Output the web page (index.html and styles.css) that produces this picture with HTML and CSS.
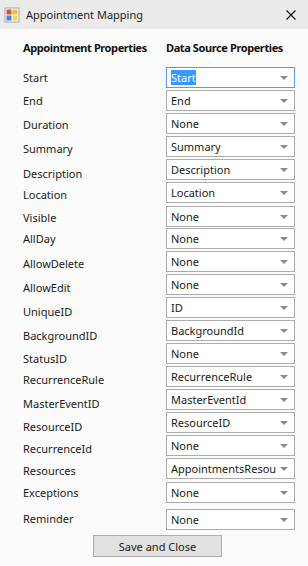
FILE: index.html
```html
<!DOCTYPE html>
<html lang="en">
<head>
    <meta charset="UTF-8">
    <meta name="viewport" content="width=device-width, initial-scale=1.0">
    <title>Appointment Mapping</title>
    <link rel="stylesheet" href="styles.css">
</head>
<body>

    <div class="titlebar">
        <svg class="app-icon" width="16" height="16" viewBox="0 0 16 16">
            <rect x="1" y="1" width="14" height="14" fill="#fff" stroke="#9aa7b8"/>
            <rect x="2.5" y="2.5" width="5" height="5" fill="#e0522b"/>
            <rect x="8.5" y="2.5" width="5" height="5" fill="#f5c02a"/>
            <rect x="2.5" y="8.5" width="5" height="5" fill="#4e7fd0"/>
            <rect x="8.5" y="8.5" width="5" height="5" fill="#f3d35a"/>
        </svg>
        <span class="title">Appointment Mapping</span>
        <svg class="close" width="10" height="10" viewBox="0 0 10 10">
            <path d="M0.5 0.5 L9.5 9.5 M9.5 0.5 L0.5 9.5" stroke="#111" stroke-width="1.1"/>
        </svg>
    </div>

    <div class="form">
        <div class="heads">
            <span class="head-left">Appointment Properties</span>
            <span class="head-right">Data Source Properties</span>
        </div>

        <div class="rows">
            <div class="row"><span class="label">Start</span><div class="combo active"><span class="sel">Start</span><span class="arrow"></span></div></div>
            <div class="row"><span class="label">End</span><div class="combo"><span>End</span><span class="arrow"></span></div></div>
            <div class="row"><span class="label o1">Duration</span><div class="combo"><span>None</span><span class="arrow"></span></div></div>
            <div class="row"><span class="label o2">Summary</span><div class="combo"><span>Summary</span><span class="arrow"></span></div></div>
            <div class="row"><span class="label o4">Description</span><div class="combo"><span>Description</span><span class="arrow"></span></div></div>
            <div class="row r24"><span class="label o2">Location</span><div class="combo"><span>Location</span><span class="arrow"></span></div></div>
            <div class="row r22"><span class="label o1">Visible</span><div class="combo"><span>None</span><span class="arrow"></span></div></div>
            <div class="row"><span class="label">AllDay</span><div class="combo"><span>None</span><span class="arrow"></span></div></div>
            <div class="row"><span class="label o2">AllowDelete</span><div class="combo"><span>None</span><span class="arrow"></span></div></div>
            <div class="row"><span class="label o3">AllowEdit</span><div class="combo"><span>None</span><span class="arrow"></span></div></div>
            <div class="row"><span class="label o4">UniqueID</span><div class="combo"><span>ID</span><span class="arrow"></span></div></div>
            <div class="row"><span class="label o5">BackgroundID</span><div class="combo"><span>BackgroundId</span><span class="arrow"></span></div></div>
            <div class="row"><span class="label o5">StatusID</span><div class="combo"><span>None</span><span class="arrow"></span></div></div>
            <div class="row"><span class="label o3">RecurrenceRule</span><div class="combo"><span>RecurrenceRule</span><span class="arrow"></span></div></div>
            <div class="row"><span class="label o4">MasterEventID</span><div class="combo"><span>MasterEventId</span><span class="arrow"></span></div></div>
            <div class="row"><span class="label o4">ResourceID</span><div class="combo"><span>ResourceID</span><span class="arrow"></span></div></div>
            <div class="row"><span class="label o3">RecurrenceId</span><div class="combo"><span>None</span><span class="arrow"></span></div></div>
            <div class="row r24"><span class="label o2">Resources</span><div class="combo"><span>AppointmentsResou</span><span class="arrow"></span></div></div>
            <div class="row r27"><span class="label">Exceptions</span><div class="combo"><span>None</span><span class="arrow"></span></div></div>
            <div class="row"><span class="label o-1">Reminder</span><div class="combo"><span>None</span><span class="arrow"></span></div></div>
        </div>

        <div class="actions">
            <button class="btn">Save and Close</button>
        </div>
    </div>

</body>
</html>
```

FILE: styles.css
```css
body {
    margin: 0;
    width: 308px;
    height: 566px;
    background-color: #fbfbfb;
    font-family: "Noto Sans", "Open Sans", sans-serif;
    font-size: 11px;
    color: #1a1a1a;
    overflow: hidden;
}
.titlebar {
    height: 29px;
    background-color: #ebebeb;
    display: flex;
    align-items: center;
    padding: 0 0 0 4px;
}
.app-icon {
    flex: none;
}
.title {
    margin-left: 6px;
    font-size: 11px;
    color: #222;
    flex: 1;
}
.close {
    flex: none;
    margin-right: 12px;
}
.form {
    padding: 11px 0 0 23px;
}
.heads {
    display: flex;
    font-weight: bold;
    font-size: 11px;
    letter-spacing: -0.4px;
    color: #111;
    height: 17px;
}
.head-left {
    width: 143px;
}
.rows {
    margin-top: 10px;
}
.row {
    display: flex;
    align-items: flex-start;
    height: 23px;
}
.row.r22 { height: 22px; }
.row.r24 { height: 24px; }
.row.r27 { height: 27px; }
.label {
    width: 143px;
    line-height: 21px;
    white-space: nowrap;
}
.label.o1 { margin-top: 1px; }
.label.o2 { margin-top: 2px; }
.label.o3 { margin-top: 3px; }
.label.o4 { margin-top: 4px; }
.label.o5 { margin-top: 5px; }
.label.o-1 { margin-top: -1px; }
.combo {
    width: 123px;
    height: 19px;
    border: 1px solid #acacac;
    background-color: #fff;
    display: flex;
    align-items: center;
    padding-left: 4px;
    box-sizing: content-box;
    overflow: hidden;
    white-space: nowrap;
}
.combo span:first-child {
    flex: 1;
    overflow: hidden;
}
.combo.active {
    border-color: #569de5;
}
.combo .sel {
    flex: none !important;
    background-color: #3399ff;
    color: #fff;
    line-height: 15px;
}
.arrow {
    flex: none;
    width: 0;
    height: 0;
    margin: 0 6px 0 4px;
    border-left: 4px solid transparent;
    border-right: 4px solid transparent;
    border-top: 4px solid #8a8a8a;
}
.combo.active .sel + .arrow {
    margin-left: auto;
}
.actions {
    margin-top: 3px;
    padding-left: 70px;
}
.btn {
    width: 129px;
    height: 22px;
    background-color: #e1e1e1;
    border: 1px solid #adadad;
    font-family: "Noto Sans", "Open Sans", sans-serif;
    font-size: 11px;
    color: #1a1a1a;
    padding: 0;
}
```
